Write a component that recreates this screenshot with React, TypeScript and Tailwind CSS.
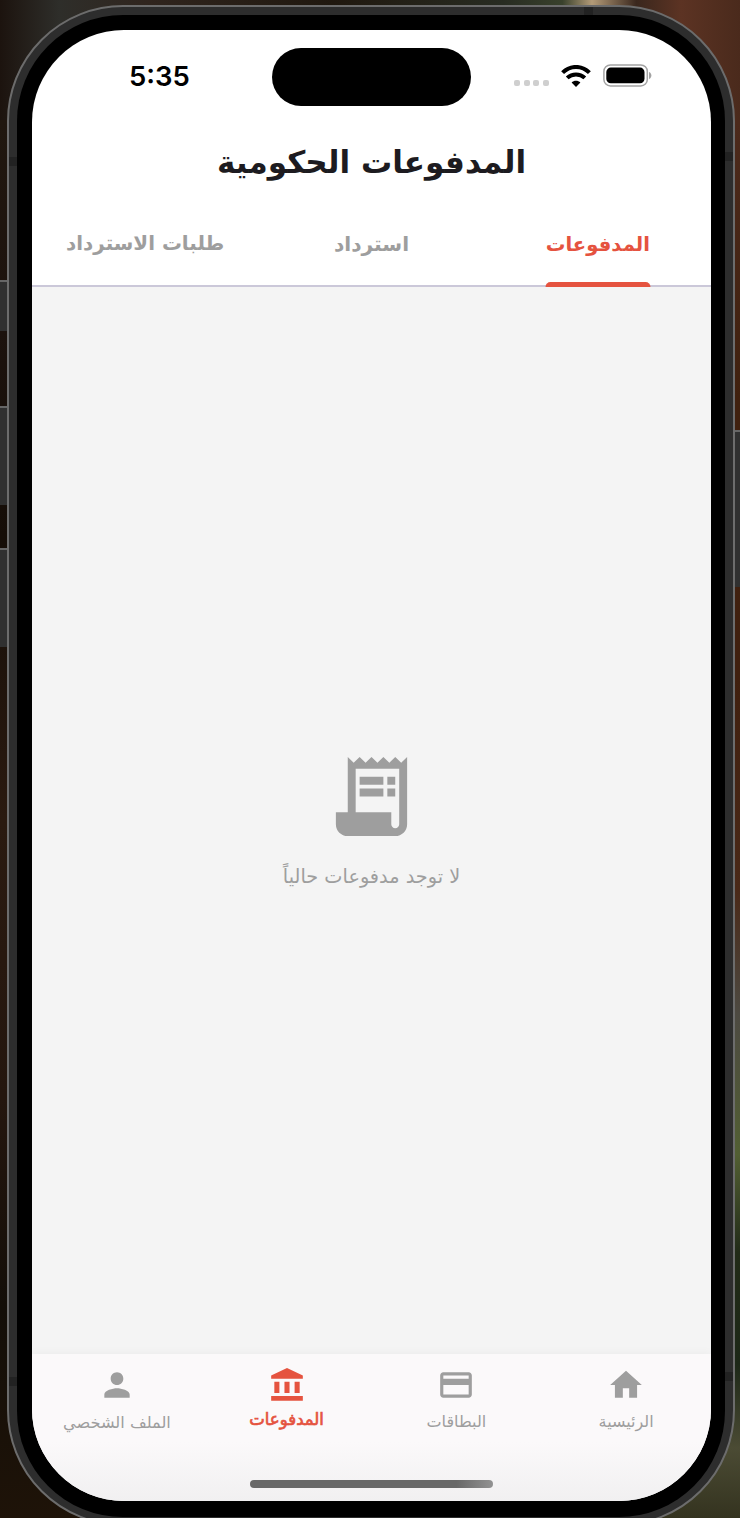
import { MdHome, MdOutlineCreditCard, MdPerson, MdReceiptLong } from "react-icons/md";

const tabs = [
  { label: "المدفوعات", size: "text-[19.6px] pt-px", active: true },
  { label: "استرداد", size: "text-[20.2px]", active: false },
  { label: "طلبات الاسترداد", size: "text-[19.9px]", active: false },
];

function BankIcon() {
  return (
    <svg viewBox="0 0 24 24" className="size-[38px]" fill="currentColor">
      <path d="M4 10h3.200v7H4zM10.400 10h3.200v7h-3.200zM2 19h20v3H2zM16.800 10h3.200v7h-3.200zM12 1.200 2 6v2h20V6z" />
    </svg>
  );
}

function WifiIcon() {
  return (
    <svg viewBox="0 0 30 22" className="-mt-[2px] -ml-px h-[22px] w-[30px]" fill="none" stroke="black" strokeWidth="4">
      <path d="M1.600 7.700C9 0 21 0 28.400 7.700" />
      <path d="M6.200 12.900c5-4.700 12.600-4.700 17.600 0" />
      <path d="M15 22 10.600 17.500c2.300-2.300 6.500-2.300 8.800 0z" fill="black" stroke="none" />
    </svg>
  );
}

function BatteryIcon() {
  return (
    <svg viewBox="0 0 49 23" className="-mt-[2px] h-[23px] w-[49px]">
      <rect x="0.900" y="0.900" width="43.400" height="21" rx="6.500" fill="none" stroke="#a3a3a3" strokeWidth="1.500" />
      <rect x="3.300" y="3.600" width="38.200" height="15.600" rx="4.500" fill="black" />
      <path d="M46 8c3.200 1.200 3.200 5.800 0 7z" fill="#a3a3a3" />
    </svg>
  );
}

function StatusBar() {
  return (
    <header dir="ltr" className="relative h-[95px] shrink-0">
      <div className="flex items-center pt-[26px] pl-[97px]">
        <span className="w-[385px] font-[Inter,sans-serif] text-[27.500px] leading-[41px] font-semibold">5:35</span>
        <div className="mt-[13px] flex w-[48px] gap-[3.500px]">
          <i className="size-[6px] rounded-[2px] bg-[#cfcfcf]" />
          <i className="size-[6px] rounded-[2px] bg-[#cfcfcf]" />
          <i className="size-[6px] rounded-[2px] bg-[#cfcfcf]" />
          <i className="size-[6px] rounded-[2px] bg-[#cfcfcf]" />
        </div>
        <WifiIcon />
        <span className="w-[12px]" />
        <BatteryIcon />
      </div>
      <div className="absolute top-[18px] left-[240px] h-[58px] w-[199px] rounded-full bg-black" />
    </header>
  );
}

function Backdrop() {
  return (
    <div className="absolute inset-0 flex flex-col">
      <div className="h-[120px] bg-[linear-gradient(90deg,#1c130e,#2e2e2a_8%,#30251e_20%,#20180f_45%,#282c22_68%,#39412c_76%,#b39b78_80%,#3a271d_86%,#5c3323_92%,#4a2a1c)]" />
      <div className="flex flex-1 justify-between">
        <div className="w-[120px] bg-[linear-gradient(180deg,#20170f,#1c120d_15%,#150d07_30%,#2a1a10_50%,#24160e_70%,#130e08_85%,#1e1308)]" />
        <div className="w-[120px] bg-[linear-gradient(180deg,#4c2a1c,#40210f_20%,#40200f_40%,#4a2918_55%,#4d4a42_64%,#525f33_74%,#222b18_81%,#1d2818_89%,#4b4b34_95%,#34331f)]" />
      </div>
    </div>
  );
}

export default function App() {
  return (
    <div className="relative h-[1518px] w-[740px] overflow-hidden bg-[#1a1109] pt-[5px] pl-[7px] font-['DejaVu_Sans',sans-serif]">
      <Backdrop />
      <div className="absolute top-[280px] left-0 h-[51px] w-[9px] border-t-2 border-[#666] bg-[#303030]" />
      <div className="absolute top-[406px] left-0 h-[99px] w-[9px] border-t-2 border-[#666] bg-[#303030]" />
      <div className="absolute top-[548px] left-0 h-[99px] w-[9px] border-t-2 border-[#666] bg-[#303030]" />
      <div className="absolute top-[430px] right-0 h-[157px] w-[7px] border-t-2 border-[#666] bg-[#303030]" />
      <div className="relative h-[1521px] w-[728px] rounded-[116px] border-2 border-[#6c6c6c] bg-[#2d2d2d] p-[8px]">
        <div className="absolute top-[150px] left-0 h-[9px] w-[8px] bg-[#222]" />
        <div className="absolute top-[145px] right-0 h-[9px] w-[8px] bg-[#222]" />
        <div className="absolute top-[1370px] left-0 h-[9px] w-[8px] bg-[#222]" />
        <div className="absolute top-[1365px] right-0 h-[9px] w-[8px] bg-[#222]" />
        <div className="absolute top-0 left-[575px] h-[8px] w-[9px] bg-[#222]" />
        <div className="relative h-[1502px] w-[708px] rounded-[106px] bg-black pt-[15px] pl-[15px]">
          <div dir="rtl" className="flex h-[1471px] w-[679px] flex-col overflow-hidden rounded-[92px] bg-white">
            <StatusBar />
            <h1 className="h-[78px] shrink-0 text-center text-[31.100px] leading-[74px] font-bold text-[#1d1b20]">المدفوعات الحكومية</h1>
            <nav className="grid h-[84px] shrink-0 grid-cols-3 border-b-2 border-[#cbc8d9]">
              {tabs.map((t) => (
                <div key={t.label} className={t.active ? "flex justify-center text-[#e5533f]" : "flex justify-center text-[#9e9e9e]"}>
                  <div className="relative h-[84px]">
                    <span className={`${t.size} block leading-[82px] font-bold whitespace-nowrap`}>{t.label}</span>
                    {t.active && <i className="absolute bottom-0 left-1/2 h-[5px] w-[105px] -translate-x-1/2 rounded-t-[5px] bg-[#e5533f]" />}
                  </div>
                </div>
              ))}
            </nav>
            <main className="flex flex-1 flex-col items-center bg-[#f4f4f4] pt-[462px] text-[#9e9e9e]">
              <MdReceiptLong className="size-[95px] shrink-0" />
              <p className="mt-[13px] text-[19.300px] leading-[40px]">لا توجد مدفوعات حالياً</p>
            </main>
            <footer className="relative h-[147px] shrink-0 bg-[linear-gradient(180deg,#fbf9fa_60%,#f1f0f1)] shadow-[0_-2px_8px_rgba(0,0,0,0.03)]">
              <div className="grid grid-cols-4 pt-[12px] text-[#9e9e9e]">
                <div className="flex flex-col items-center">
                  <MdHome className="size-[38px]" />
                  <span className="text-[16px] leading-[36px]">الرئيسية</span>
                </div>
                <div className="flex flex-col items-center">
                  <MdOutlineCreditCard className="size-[38px]" />
                  <span className="text-[16px] leading-[36px]">البطاقات</span>
                </div>
                <div className="flex flex-col items-center text-[#e5533f]">
                  <BankIcon />
                  <span className="text-[16.500px] leading-[31px] [-webkit-text-stroke:0.7px_#e5533f]">المدفوعات</span>
                </div>
                <div className="flex flex-col items-center">
                  <MdPerson className="size-[38px]" />
                  <span className="text-[16.200px] leading-[37px]">الملف الشخصي</span>
                </div>
              </div>
              <div className="absolute bottom-[13px] left-[218px] h-[8px] w-[243px] rounded-full bg-[linear-gradient(90deg,#686868,#686868_85%,#929292)]" />
            </footer>
          </div>
        </div>
      </div>
    </div>
  );
}
